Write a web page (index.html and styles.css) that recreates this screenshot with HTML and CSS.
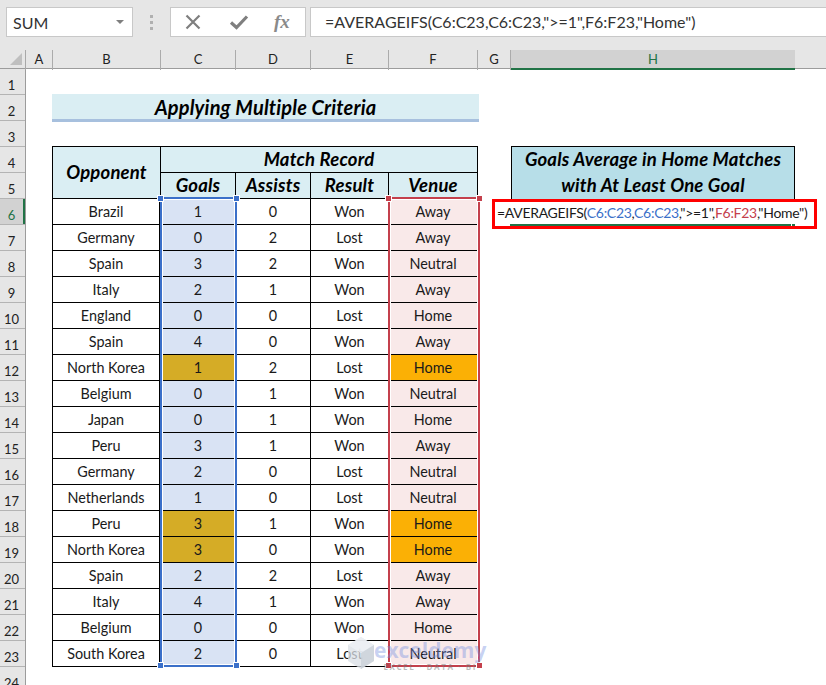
FILE: index.html
```html
<!DOCTYPE html>
<html lang="en">
<head>
<meta charset="utf-8">
<title>AVERAGEIFS</title>
<link rel="stylesheet" href="styles.css">
</head>
<body>
<div class="toolbar">
  <div class="namebox"><span>SUM</span><i class="caret"></i></div>
  <div class="grip"><i></i><i></i><i></i></div>
  <div class="fxbox">
    <svg class="ico" width="20" height="20" viewBox="0 0 20 20"><path d="M3.5 3.5 16.5 16.5M16.5 3.5 3.5 16.5" stroke="#7f7f7f" stroke-width="2.2" fill="none"/></svg>
    <svg class="ico" width="20" height="20" viewBox="0 0 20 20"><path d="M2 10.5 7.5 15.5 18 4.5" stroke="#7f7f7f" stroke-width="3.2" fill="none"/></svg>
    <span class="fx">fx</span>
  </div>
  <div class="formula">=AVERAGEIFS(C6:C23,C6:C23,"&gt;=1",F6:F23,"Home")</div>
</div>
<div class="colhead">
  <div class="corner"><i></i></div>
  <div class="ch a">A</div><div class="ch b">B</div><div class="ch c">C</div><div class="ch d">D</div><div class="ch e">E</div><div class="ch f">F</div><div class="ch g">G</div><div class="ch h active">H</div>
</div>
<div class="body">
  <div class="rowhead">
    <div>1</div><div>2</div><div>3</div><div>4</div><div>5</div><div class="active">6</div><div>7</div><div>8</div><div>9</div><div>10</div><div>11</div><div>12</div><div>13</div><div>14</div><div>15</div><div>16</div><div>17</div><div>18</div><div>19</div><div>20</div><div>21</div><div>22</div><div>23</div><div>24</div>
  </div>
  <div class="sheet">
    <div class="title">Applying Multiple Criteria</div>
    <div class="th opp">Opponent</div>
    <div class="th rec">Match Record</div>
    <div class="th h-c">Goals</div>
    <div class="th h-d">Assists</div>
    <div class="th h-e">Result</div>
    <div class="th h-f">Venue</div>
    <div class="avg">Goals Average in Home Matches<br>with At Least One Goal</div>
    <div class="data">
      <div>Brazil</div><div class="sc">1</div><div>0</div><div>Won</div><div class="sf">Away</div>
      <div>Germany</div><div class="sc">0</div><div>2</div><div>Lost</div><div class="sf">Away</div>
      <div>Spain</div><div class="sc">3</div><div>2</div><div>Won</div><div class="sf">Neutral</div>
      <div>Italy</div><div class="sc">2</div><div>1</div><div>Won</div><div class="sf">Away</div>
      <div>England</div><div class="sc">0</div><div>0</div><div>Lost</div><div class="sf">Home</div>
      <div>Spain</div><div class="sc">4</div><div>0</div><div>Won</div><div class="sf">Away</div>
      <div>North Korea</div><div class="gold">1</div><div>2</div><div>Lost</div><div class="orange">Home</div>
      <div>Belgium</div><div class="sc">0</div><div>1</div><div>Won</div><div class="sf">Neutral</div>
      <div>Japan</div><div class="sc">0</div><div>1</div><div>Won</div><div class="sf">Home</div>
      <div>Peru</div><div class="sc">3</div><div>1</div><div>Won</div><div class="sf">Away</div>
      <div>Germany</div><div class="sc">2</div><div>0</div><div>Lost</div><div class="sf">Neutral</div>
      <div>Netherlands</div><div class="sc">1</div><div>0</div><div>Lost</div><div class="sf">Neutral</div>
      <div>Peru</div><div class="gold">3</div><div>1</div><div>Won</div><div class="orange">Home</div>
      <div>North Korea</div><div class="gold">3</div><div>0</div><div>Won</div><div class="orange">Home</div>
      <div>Spain</div><div class="sc">2</div><div>2</div><div>Lost</div><div class="sf">Away</div>
      <div>Italy</div><div class="sc">4</div><div>1</div><div>Won</div><div class="sf">Away</div>
      <div>Belgium</div><div class="sc">0</div><div>0</div><div>Won</div><div class="sf">Home</div>
      <div>South Korea</div><div class="sc">2</div><div>0</div><div>Lost</div><div class="sf">Neutral</div>
    </div>
    <div class="range range-c"><i class="tl"></i><i class="tr"></i><i class="bl"></i><i class="br"></i></div>
    <div class="range range-f"><i class="tl"></i><i class="tr"></i><i class="bl"></i><i class="br"></i></div>
    <div class="callout">
      <span>=AVERAGEIFS(<b class="blue">C6:C23</b>,<b class="blue">C6:C23</b>,"&gt;=1",<b class="red">F6:F23</b>,"Home")</span>
      <i class="active-line"></i><i class="active-handle"></i>
    </div>
    <div class="mark">
      <svg width="26" height="32" viewBox="0 0 26 32"><path d="M13 0 26 8V24L13 32 0 24V8Z" fill="#d9dfe6" fill-opacity=".75"/><path d="M13 0 26 8 13 16 0 8Z" fill="#eef1f6" fill-opacity=".8"/><path d="M13 16 26 8V24L13 32Z" fill="#c9d0d8" fill-opacity=".75"/></svg>
      <div class="mark-text"><span class="mark-name">exceldemy</span><span class="mark-sub">EXCEL · DATA · BI</span></div>
    </div>
  </div>
</div>
</body>
</html>
```
FILE: styles.css
```css
* { box-sizing: border-box; }
html, body { margin: 0; padding: 0; }
body {
  width: 826px;
  height: 685px;
  overflow: hidden;
  background: #fff;
  color: #1a1a1a;
  font-family: Lato, "Open Sans", sans-serif;
  display: flex;
  flex-direction: column;
}
.toolbar {
  height: 50px;
  flex: none;
  background: #e6e6e6;
  display: flex;
  align-items: flex-start;
  padding: 7px 0 0 6px;
}
.namebox {
  width: 127px;
  height: 30px;
  background: #fff;
  border: 1px solid #c8c8c8;
  display: flex;
  align-items: center;
  justify-content: space-between;
  padding: 0 8px 0 6px;
  font-size: 16px;
  color: #333;
}
.caret {
  width: 0;
  height: 0;
  border-left: 4px solid transparent;
  border-right: 4px solid transparent;
  border-top: 4px solid #7f7f7f;
}
.grip {
  width: 37px;
  height: 30px;
  display: flex;
  flex-direction: column;
  align-items: center;
  justify-content: center;
  gap: 3px;
}
.grip i { width: 3px; height: 3px; background: #b0b0b0; }
.fxbox {
  width: 136px;
  height: 30px;
  background: #fff;
  border: 1px solid #c8c8c8;
  display: flex;
  align-items: center;
  gap: 26px;
  padding-left: 12px;
}
.fx {
  font-family: "Liberation Serif", serif;
  font-style: italic;
  font-weight: 700;
  font-size: 19px;
  color: #8a8a8a;
  margin-left: -1px;
}
.formula {
  flex: 1;
  height: 30px;
  margin-left: 4px;
  background: #fff;
  border: 1px solid #c8c8c8;
  border-right: 0;
  padding-left: 14px;
  font-size: 16px;
  line-height: 28px;
  color: #333;
  white-space: nowrap;
}
.colhead {
  height: 19px;
  flex: none;
  display: grid;
  grid-template-columns: 26px 27px 108px 75px 75px 78px 89px 33px 284px 1fr;
  background: #e6e6e6;
  border-bottom: 1px solid #9c9c9c;
}
.corner { border-right: 1px solid #a8a8a8; position: relative; }
.corner i {
  display: block;
  width: 0;
  height: 0;
  margin: 3px 0 0 10px;
  border-left: 12px solid transparent;
  border-bottom: 12px solid #bfbfbf;
}
.ch {
  text-align: center;
  font-size: 13px;
  line-height: 18px;
  color: #222;
  border-right: 1px solid #ababab;
}
.ch.active {
  background: #d2d2d2;
  color: #217346;
  border-right: 0;
  border-bottom: 2px solid #217346;
  height: 20px;
}
.body { flex: 1; display: flex; min-height: 0; }
.rowhead {
  width: 26px;
  flex: none;
  background: #e6e6e6;
  border-right: 1px solid #9c9c9c;
}
.rowhead div {
  height: 26px;
  border-bottom: 1px solid #b4b4b4;
  text-align: center;
  font-size: 13px;
  line-height: 32px;
  padding-right: 2px;
  color: #222;
  overflow: hidden;
}
.rowhead .active {
  background: #d2d2d2;
  color: #217346;
  box-shadow: inset -2px 0 0 #217346;
}
.sheet {
  position: relative;
  flex: 1;
  display: grid;
  grid-template-columns: 27px 108px 75px 75px 78px 89px 33px 284px 1fr;
  grid-template-rows: repeat(24, 26px);
}
.title {
  grid-area: 2 / 2 / 3 / 7;
  width: 427px;
  margin-left: -1px;
  height: 28px;
  background: #daeef3;
  border-bottom: 3px solid #a7c0de;
  font-size: 20px;
  letter-spacing: .15px;
  font-weight: 700;
  font-style: italic;
  text-align: center;
  line-height: 26px;
  color: #000;
  margin-top: -1px;
}
.th {
  background: #daeef3;
  font-size: 18.5px;
  letter-spacing: .2px;
  font-weight: 700;
  font-style: italic;
  color: #000;
  border-right: 1px solid #000;
  border-bottom: 1px solid #000;
  display: flex;
  align-items: center;
  justify-content: center;
  padding-bottom: 2px;
}
.opp { grid-area: 4 / 2 / 6 / 3; margin: -1px 0 0 -1px; border-left: 1px solid #000; border-top: 1px solid #000; }
.rec { grid-area: 4 / 3 / 5 / 7; margin-top: -1px; border-top: 1px solid #000; }
.h-c { grid-area: 5 / 3; }
.h-d { grid-area: 5 / 4; }
.h-e { grid-area: 5 / 5; }
.h-f { grid-area: 5 / 6; }
.avg {
  grid-area: 4 / 8 / 6 / 9;
  margin-top: -1px;
  background: #b7dee8;
  box-shadow: inset 0 1px 0 #000, inset 1px 0 0 #000, inset -1px 0 0 #000;
  font-size: 18.5px;
  letter-spacing: .2px;
  font-weight: 700;
  font-style: italic;
  color: #000;
  text-align: center;
  line-height: 26px;
}
.data {
  grid-area: 6 / 2 / 24 / 7;
  display: grid;
  grid-template-columns: 108px 75px 75px 78px 89px;
  grid-auto-rows: 26px;
  margin-left: -1px;
  width: 426px;
  border-left: 1px solid #000;
}
.data > div {
  border-right: 1px solid #000;
  border-bottom: 1px solid #000;
  text-align: center;
  font-size: 14.4px;
  line-height: 25px;
  color: #1a1a1a;
}
.data > div:nth-child(5n+1) { width: 107px; }
.sc { background: #d9e3f4; }
.sf { background: #f9e9e9; }
.gold { background: #d5ac26; }
.orange { background: #fbb005; }
.range { border: 2px solid; box-shadow: inset 0 0 0 1px #fff; z-index: 2; position: relative; }
.range i {
  position: absolute;
  width: 7px;
  height: 7px;
  border: 1px solid #fff;
  background: currentColor;
}
.range .tl { left: -5px; top: -4px; }
.range .tr { right: -5px; top: -4px; }
.range .bl { left: -5px; bottom: -4px; }
.range .br { right: -5px; bottom: -4px; }
.range-c {
  grid-area: 6 / 3 / 24 / 4;
  margin: -2px -1px 0 -1px;
  color: #3b70c9;
  border-color: #3b70c9;
}
.range-f {
  grid-area: 6 / 6 / 24 / 7;
  margin: -2px -2px 0 -1px;
  color: #c4404c;
  border-color: #c4404c;
}
.callout {
  position: absolute;
  left: 466px;
  top: 130px;
  width: 325px;
  height: 30px;
  background: #fff;
  border: 3px solid #f00;
  z-index: 3;
  font-size: 14px;
  letter-spacing: -.3px;
  line-height: 22px;
  padding-left: 2px;
  color: #1a1a1a;
  white-space: nowrap;
}
.callout b { font-weight: 400; }
.blue { color: #3b70c9; }
.red { color: #c4404c; }
.active-line {
  position: absolute;
  left: 15px;
  top: 22px;
  width: 281px;
  height: 2px;
  background: #217346;
}
.active-handle {
  position: absolute;
  left: 297px;
  top: 22px;
  width: 3px;
  height: 2px;
  background: #217346;
}
.mark {
  position: absolute;
  left: 322px;
  top: 568px;
  display: flex;
  gap: 0;
  z-index: 4;
  pointer-events: none;
}
.mark-text { display: flex; flex-direction: column; align-items: center; padding-top: 1px; }
.mark-name {
  font-family: "Open Sans", sans-serif;
  font-size: 21px;
  font-weight: 700;
  line-height: 24px;
  color: rgba(120, 145, 225, .42);
}
.mark-sub {
  font-family: "Open Sans", sans-serif;
  font-size: 8px;
  font-weight: 700;
  letter-spacing: 1.6px;
  line-height: 9px;
  color: rgba(120, 120, 120, .5);
}
```
